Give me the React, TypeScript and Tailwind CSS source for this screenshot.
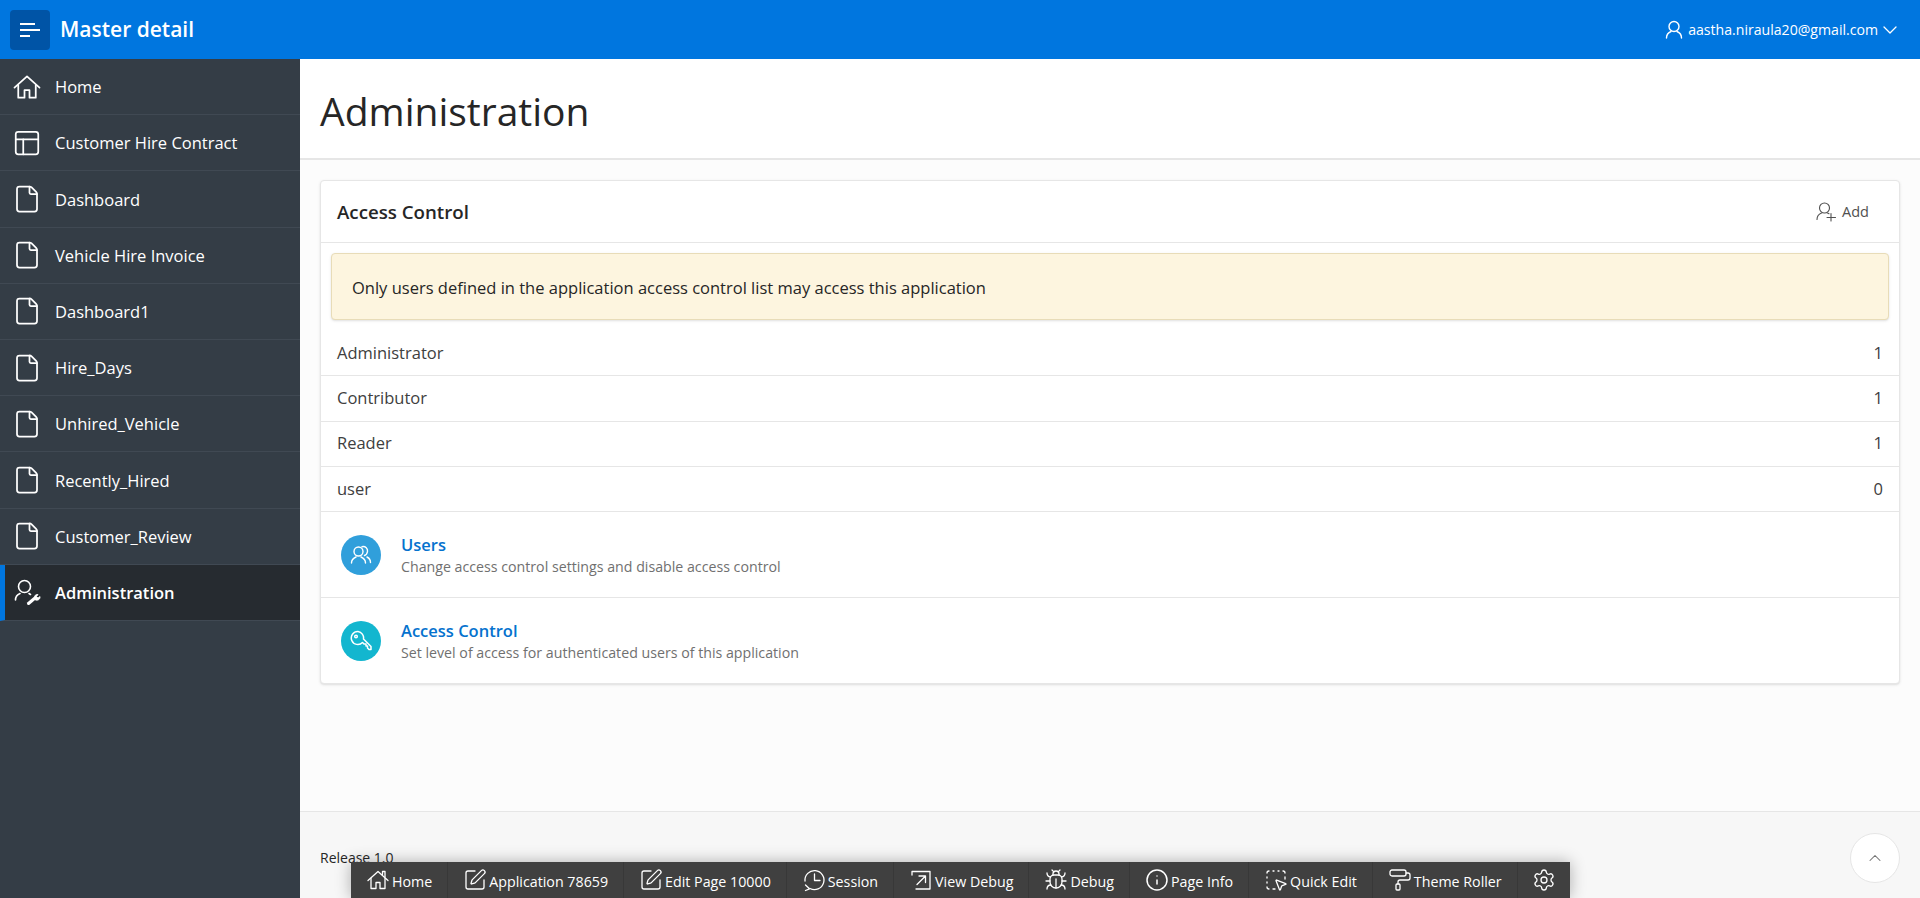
import React from "react";
import {
  Bug,
  ChevronDown,
  ChevronUp,
  File,
  Info,
  PaintRoller,
  PanelsTopLeft,
  Settings,
  SquareDashedMousePointer,
  SquarePen,
} from "lucide-react";

const font = "font-['Open_Sans','Noto_Sans',sans-serif]";

type IconProps = { size?: number; sw?: number };

// the icons below are not in lucide in this shape, drawn by hand
const HomeIcon = ({ size = 30, sw = 1.4, chimney = false }: IconProps & { chimney?: boolean }) => (
  <svg width={size} height={size} viewBox="0 0 24 24" fill="none" stroke="currentColor" strokeWidth={sw} strokeLinecap="round" strokeLinejoin="round">
    <path d="M2 12.5 L12 3.5 L22 12.5" />
    <path d="M5 10.5 V20.5 H10 V14.5 H14 V20.5 H19 V10.5" />
    {chimney && <path d="M16.5 6.5 V3.5 H19 V9" />}
  </svg>
);

const UserWrench = () => (
  <svg width="30" height="30" viewBox="0 0 30 30" fill="none" stroke="currentColor" strokeWidth="1.6" strokeLinecap="round">
    <circle cx="12.5" cy="9.5" r="6" />
    <path d="M3.5 23 C3.5 19.5 5.5 17.5 8 16.5" />
    <path d="M17 16.5 L18.5 17.5" />
    <path d="M16.5 26.5 L23 21" strokeWidth="3" />
    <path d="M22.5 21 C22 18.5 24 17 26 17.5 L24.5 19.5 L26 21 L28 19.5 C28.5 22 26 24 23.5 23 Z" fill="currentColor" strokeWidth="0.8" />
  </svg>
);

const UserIcon = () => (
  <svg width="18" height="19" viewBox="0 0 18 19" fill="none" stroke="currentColor" strokeWidth="1.4" strokeLinecap="round">
    <circle cx="9" cy="6.5" r="5" />
    <path d="M1.5 18 C1.5 14.5 3.5 12.5 6 11.5" />
    <path d="M16.5 18 C16.5 14.5 14.5 12.5 12 11.5" />
  </svg>
);

const UserPlusIcon = () => (
  <svg width="20" height="20" viewBox="0 0 20 20" fill="none" stroke="currentColor" strokeWidth="1.1" strokeLinecap="round">
    <circle cx="8.5" cy="6" r="5" />
    <path d="M1 17.5 C1 14 3 12 5.5 11" />
    <path d="M11.5 11 L13 11.7" />
    <path d="M15 11.5 V19 M11 15.5 H19.5" />
  </svg>
);

const UsersIcon = () => (
  <svg width="22" height="20" viewBox="0 0 22 20" fill="none" stroke="currentColor" strokeWidth="1.4" strokeLinecap="round">
    <circle cx="8.5" cy="6.5" r="4.5" />
    <path d="M1.5 18 C1.5 15 3.5 13 6 12" />
    <path d="M15.5 18 C15.5 15 13.5 13 11 12" />
    <path d="M12 1.7 C15.5 1 18 3.5 17.5 6.5 C17.2 8.5 16 10 14.5 10.5" />
    <path d="M20.5 17.5 C20.5 15 19 13 17 12" />
  </svg>
);

const KeyIcon = () => (
  <svg width="22" height="22" viewBox="0 0 22 22" fill="none" stroke="currentColor" strokeWidth="1.5" strokeLinecap="round" strokeLinejoin="round">
    <path d="M8 1.5 A6.5 6.5 0 1 0 12.5 12.5 L14 14 H16 V16 L17.5 16 V18 L19 19.5 H21 V16.5 L13.5 9 A6.5 6.5 0 0 0 8 1.5 Z" />
    <circle cx="6" cy="6.5" r="1.3" />
  </svg>
);

const SessionIcon = () => (
  <svg width="24" height="24" viewBox="0 0 24 24" fill="none" stroke="currentColor" strokeWidth="1.3" strokeLinecap="round" strokeLinejoin="round">
    <path d="M3 13 A9.5 9.5 0 1 1 8 20.5" />
    <path d="M3.5 17 L7.5 20.8 L3.5 22.5" />
    <path d="M12.5 6 V12.5 H18" />
  </svg>
);

const ViewDebugIcon = () => (
  <svg width="24" height="24" viewBox="0 0 24 24" fill="none" stroke="currentColor" strokeWidth="1.3" strokeLinecap="round" strokeLinejoin="round">
    <path d="M3 7 V3.5 H21 V21 H7" />
    <path d="M8 16.5 L16.5 8 M10 8 H16.5 V14.5" />
  </svg>
);

const navIcon = <File size={30} strokeWidth={1.4} />;

const navItems = [
  { label: "Home", icon: <HomeIcon /> },
  { label: "Customer Hire Contract", icon: <PanelsTopLeft size={30} strokeWidth={1.4} /> },
  { label: "Dashboard", icon: navIcon },
  { label: "Vehicle Hire Invoice", icon: navIcon },
  { label: "Dashboard1", icon: navIcon },
  { label: "Hire_Days", icon: navIcon },
  { label: "Unhired_Vehicle", icon: navIcon },
  { label: "Recently_Hired", icon: navIcon },
  { label: "Customer_Review", icon: navIcon },
  { label: "Administration", icon: <UserWrench />, active: true },
];

const roles = [
  { name: "Administrator", count: 1 },
  { name: "Contributor", count: 1 },
  { name: "Reader", count: 1 },
  { name: "user", count: 0 },
];

const toolbarItems = [
  { label: "Home", icon: <HomeIcon size={24} sw={1.3} chimney /> },
  { label: "Application 78659", icon: <SquarePen size={24} strokeWidth={1.3} /> },
  { label: "Edit Page 10000", icon: <SquarePen size={24} strokeWidth={1.3} /> },
  { label: "Session", icon: <SessionIcon /> },
  { label: "View Debug", icon: <ViewDebugIcon /> },
  { label: "Debug", icon: <Bug size={24} strokeWidth={1.3} /> },
  { label: "Page Info", icon: <Info size={24} strokeWidth={1.5} /> },
  { label: "Quick Edit", icon: <SquareDashedMousePointer size={24} strokeWidth={1.3} /> },
  { label: "Theme Roller", icon: <PaintRoller size={24} strokeWidth={1.3} /> },
];

const App: React.FC = () => {
  return (
    <div className={`${font} relative flex h-screen flex-col overflow-hidden bg-white text-[#262626]`}>
      {/* Header */}
      <header className="flex h-[59px] shrink-0 items-center justify-between bg-[#0076df] pl-[10px] pr-[18px] text-white">
        <div className="flex items-center gap-[10px]">
          <button className="flex h-10 w-10 flex-col justify-center gap-[4px] rounded-sm bg-[#0054a6] pl-[10px]">
            <span className="h-[2px] w-[15px] bg-white" />
            <span className="h-[2px] w-5 bg-white" />
            <span className="h-[2px] w-[10px] bg-white" />
          </button>
          <span className="text-[21px] font-semibold">Master detail</span>
        </div>
        <div className="flex items-center text-[14.1px]">
          <UserIcon />
          <span className="ml-[5px]">aastha.niraula20@gmail.com</span>
          <ChevronDown size={24} strokeWidth={1.3} />
        </div>
      </header>

      <div className="flex min-h-0 flex-1">
        {/* Sidebar */}
        <nav className="w-[300px] shrink-0 bg-[#343d46] text-white">
          {navItems.map((item) => (
            <div
              key={item.label}
              className={
                item.active
                  ? "flex h-[56.2px] items-center gap-[13px] border-b border-l-[5px] border-b-[#404953] border-l-[#0076df] bg-[#262b30] pl-[7px] text-[16.5px] font-semibold"
                  : "flex h-[56.2px] items-center gap-[13px] border-b border-[#404953] pl-3 text-[16.5px]"
              }
            >
              <span className="flex w-[30px] justify-center">{item.icon}</span>
              <span className="pt-[2px]">{item.label}</span>
            </div>
          ))}
        </nav>

        {/* Main */}
        <main className="flex min-w-0 flex-1 flex-col bg-[#fcfcfc]">
          <div className="flex h-[101px] shrink-0 items-center border-b-2 border-[#e6e6e6] bg-white px-5 pt-1">
            <h1 className="text-[39px] font-medium leading-none">Administration</h1>
          </div>

          <div className="flex-1 px-5 pt-5">
            <section className="rounded-sm border border-[#e6e6e6] bg-white shadow-sm">
              <div className="flex h-[62px] items-center justify-between border-b border-[#e6e6e6] pl-4 pr-[30px]">
                <h2 className="pt-[2px] text-[18.7px] font-semibold">Access Control</h2>
                <div className="flex items-center gap-[6px] text-[14.5px] text-[#505050]">
                  <UserPlusIcon />
                  <span>Add</span>
                </div>
              </div>

              <div className="px-[10px] pb-[11px] pt-[10px]">
                <div className="flex h-[67px] items-center rounded-sm border border-[#e8dcb8] bg-[#fdf5df] px-5 pt-[3px] text-[16.5px] shadow-sm">
                  Only users defined in the application access control list may access this application
                </div>
              </div>

              <div>
                {roles.map((role) => (
                  <div key={role.name} className="flex h-[45.3px] items-center justify-between border-b border-[#e6e6e6] px-4 text-[16.5px] text-[#404040]">
                    <span>{role.name}</span>
                    <span>{role.count}</span>
                  </div>
                ))}
              </div>

              <div className="flex h-[86px] items-center gap-5 border-b border-[#e6e6e6] px-5">
                <span className="flex h-10 w-10 items-center justify-center rounded-full bg-[#309fdb] text-white">
                  <UsersIcon />
                </span>
                <div className="pt-[3px]">
                  <div className="text-[16.5px] font-semibold leading-[22px] text-[#0572ce]">Users</div>
                  <div className="text-[14.2px] leading-[22px] text-[#707070]">Change access control settings and disable access control</div>
                </div>
              </div>
              <div className="flex h-[85px] items-center gap-5 px-5">
                <span className="flex h-10 w-10 items-center justify-center rounded-full bg-[#13b6cf] text-white">
                  <KeyIcon />
                </span>
                <div className="pt-[3px]">
                  <div className="text-[16.5px] font-semibold leading-[22px] text-[#0572ce]">Access Control</div>
                  <div className="text-[14.2px] leading-[22px] text-[#707070]">Set level of access for authenticated users of this application</div>
                </div>
              </div>
            </section>
          </div>

          {/* Footer */}
          <footer className="flex h-[87px] shrink-0 items-start justify-between border-t border-[#e6e6e6] bg-[#f7f7f7] pl-5 pr-5 pt-[21px]">
            <span className="mt-[15px] text-sm">Release 1.0</span>
            <button className="flex h-[50px] w-[50px] items-center justify-center rounded-full border border-[#e6e6e6] bg-white text-[#707070]">
              <ChevronUp size={20} strokeWidth={1.25} />
            </button>
          </footer>
        </main>
      </div>

      {/* Developer toolbar, floats over the page */}
      <div className="absolute bottom-0 left-[351px] flex h-9 items-center bg-[#404040] text-[14.25px] text-white shadow-[0_0_16px_rgba(0,0,0,0.3)]">
        {toolbarItems.map((item) => (
          <div key={item.label} className="flex h-full items-center gap-[2px] border-r border-[#383838] px-[15px]">
            {item.icon}
            <span className="pt-[3px]">{item.label}</span>
          </div>
        ))}
        <div className="flex h-full items-center px-[14px]">
          <Settings size={24} strokeWidth={1.3} />
        </div>
      </div>
    </div>
  );
};

export default App;
